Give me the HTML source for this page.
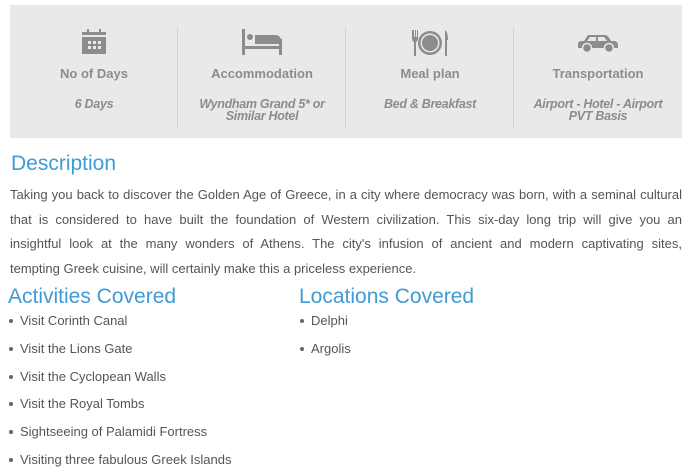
<!DOCTYPE html>
<html><head><meta charset="utf-8"><style>
*{margin:0;padding:0;box-sizing:border-box}
body{width:692px;height:472px;background:#fff;font-family:"Liberation Sans",sans-serif;color:#555;overflow:hidden;position:relative}
.box{position:absolute;left:10px;top:5px;width:672px;height:133px;background:#e9e9e9}
.col{position:absolute;top:0;width:168px;height:133px;text-align:center;color:#8c8c8c}
.div{position:absolute;top:22px;width:1px;height:101px;background:#d2d2d2}
.col svg{position:absolute;left:50%;top:24px;transform:translateX(-50%)}
.t{position:absolute;top:61px;width:100%;font-size:13px;font-weight:bold}
.v{position:absolute;top:93px;width:100%;font-size:12.5px;font-weight:bold;font-style:italic;line-height:12px;letter-spacing:-0.3px}
h2{position:absolute;font-family:"Liberation Sans",sans-serif;font-weight:normal;color:#3f9bd6;font-size:21px}
p{position:absolute;left:10px;top:183px;width:672px;font-size:13px;line-height:24.5px;color:#555;letter-spacing:0}
p span{display:block;white-space:nowrap;text-align:justify;text-align-last:justify}
p span.l{text-align-last:left}
ul{position:absolute;list-style:none;font-size:13px;line-height:27.8px}
li{padding-left:12px;position:relative}
li:before{content:"";position:absolute;left:1px;top:12px;width:4px;height:4px;border-radius:50%;background:#666}
</style></head><body>
<div class="box">
 <div class="col" style="left:0">
  <svg width="28" height="26" viewBox="0 0 28 26"><rect x="7" y="0" width="2" height="5" fill="#8c8c8c"/><rect x="19" y="0" width="2" height="5" fill="#8c8c8c"/><rect x="2" y="3" width="24" height="3" fill="#8c8c8c"/><rect x="2" y="8" width="24" height="17" fill="#8c8c8c"/><g fill="#e9e9e9"><rect x="8" y="12" width="3" height="3"/><rect x="13" y="12" width="3" height="3"/><rect x="18" y="12" width="3" height="3"/><rect x="8" y="17" width="3" height="3"/><rect x="13" y="17" width="3" height="3"/><rect x="18" y="17" width="3" height="3"/></g></svg>
  <div class="t">No of Days</div><div class="v">6 Days</div></div>
 <div class="div" style="left:167px"></div>
 <div class="col" style="left:168px">
  <svg width="42" height="26" viewBox="0 0 42 26"><rect x="1" y="0" width="3" height="26" fill="#8c8c8c"/><rect x="38" y="10" width="3" height="16" fill="#8c8c8c"/><rect x="1" y="17" width="40" height="3" fill="#8c8c8c"/><circle cx="9" cy="8" r="3" fill="#8c8c8c"/><path d="M14 6 H34 Q40 6 40 12 V15 H14 Z" fill="#8c8c8c"/></svg>
  <div class="t">Accommodation</div><div class="v">Wyndham Grand 5* or<br>Similar Hotel</div></div>
 <div class="div" style="left:335px"></div>
 <div class="col" style="left:336px">
  <svg width="40" height="28" viewBox="0 0 40 28"><path d="M2 1v8q0 3 2 4v14h2V13q2-1 2-4V1H7v7H6V1H5v7H4V1z" fill="#8c8c8c"/><circle cx="20" cy="14" r="12" fill="#8c8c8c"/><circle cx="20" cy="14" r="9.5" fill="#e9e9e9"/><circle cx="20" cy="14" r="8" fill="#8c8c8c"/><path d="M35 1q3 2 3 10h-1v16h-2z" fill="#8c8c8c"/></svg>
  <div class="t">Meal plan</div><div class="v">Bed &amp; Breakfast</div></div>
 <div class="div" style="left:503px"></div>
 <div class="col" style="left:504px">
  <svg width="42" height="20" viewBox="0 0 42 20" style="top:28px"><path d="M11 2h17q3 0 6 6h4q3 1 3 4v3H1v-4q0-3 4-3h2z" fill="#8c8c8c"/><path d="M13 4h6v4h-9zM21 4h6l3 4h-9z" fill="#e9e9e9"/><circle cx="10" cy="15" r="4.5" fill="#8c8c8c" stroke="#e9e9e9" stroke-width="1.5"/><circle cx="32" cy="15" r="4.5" fill="#8c8c8c" stroke="#e9e9e9" stroke-width="1.5"/></svg>
  <div class="t">Transportation</div><div class="v">Airport - Hotel - Airport<br>PVT Basis</div></div>
</div>
<h2 style="left:11px;top:152px">Description</h2>
<p><span>Taking you back to discover the Golden Age of Greece, in a city where democracy was born, with a seminal cultural</span><span>that is considered to have built the foundation of Western civilization. This six-day long trip will give you an</span><span>insightful look at the many wonders of Athens. The city's infusion of ancient and modern captivating sites,</span><span class="l">tempting Greek cuisine, will certainly make this a priceless experience.</span></p>
<h2 style="left:8px;top:285px">Activities Covered</h2>
<h2 style="left:299px;top:285px">Locations Covered</h2>
<ul style="left:8px;top:307px">
<li>Visit Corinth Canal</li><li>Visit the Lions Gate</li><li>Visit the Cyclopean Walls</li><li>Visit the Royal Tombs</li><li>Sightseeing of Palamidi Fortress</li><li>Visiting three fabulous Greek Islands</li></ul>
<ul style="left:299px;top:307px"><li>Delphi</li><li>Argolis</li></ul>
</body></html>
